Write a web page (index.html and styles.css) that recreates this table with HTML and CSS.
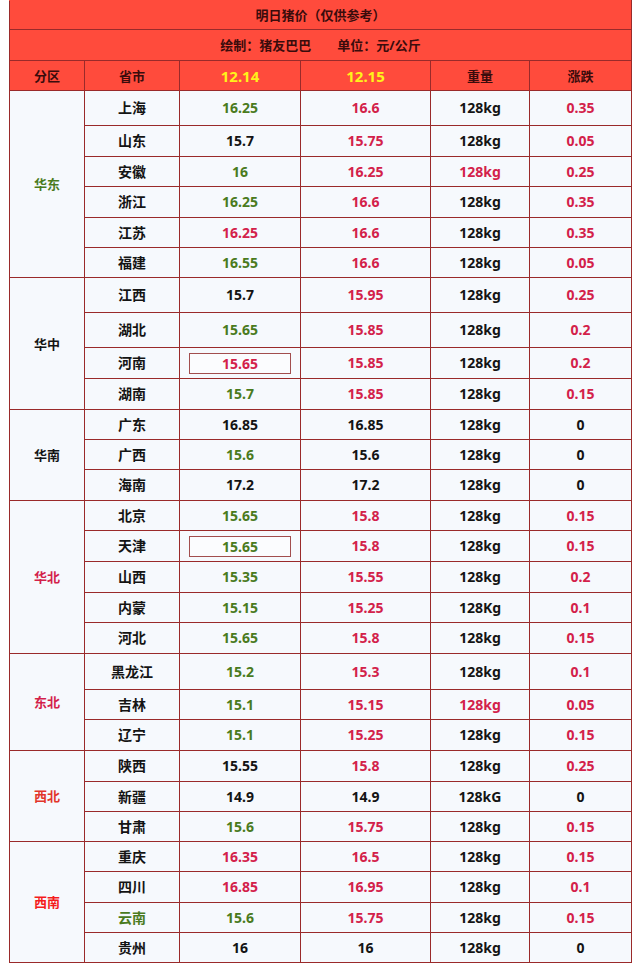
FILE: index.html
```html
<!DOCTYPE html>
<html lang="zh">
<head>
<meta charset="utf-8">
<title>明日猪价</title>
<link rel="stylesheet" href="styles.css">
</head>
<body>
<div class="page">
<table class="price">
  <colgroup>
    <col class="c-area"><col class="c-prov"><col class="c-d1"><col class="c-d2"><col class="c-w"><col class="c-chg">
  </colgroup>
  <thead>
    <tr class="t-title"><th colspan="6">明日猪价<span class="punct">（</span>仅供参考<span class="punct">）</span></th></tr>
    <tr class="t-sub"><th colspan="6">绘制<span class="punct">：</span>猪友巴巴<span class="gap">单位<span class="punct">：</span>元/公斤</span></th></tr>
    <tr class="t-head"><th>分区</th><th>省市</th><th class="date">12.14</th><th class="date">12.15</th><th>重量</th><th>涨跌</th></tr>
  </thead>
  <tbody>
    <tr class="r35"><td rowspan="6" class="area g">华东</td><td>上海</td><td class="g">16.25</td><td class="r">16.6</td><td>128kg</td><td class="r">0.35</td></tr>
    <tr class="r31"><td>山东</td><td>15.7</td><td class="r">15.75</td><td>128kg</td><td class="r">0.05</td></tr>
    <tr class="r30"><td>安徽</td><td class="g">16</td><td class="r">16.25</td><td class="r">128kg</td><td class="r">0.25</td></tr>
    <tr class="r31"><td>浙江</td><td class="g">16.25</td><td class="r">16.6</td><td>128kg</td><td class="r">0.35</td></tr>
    <tr class="r30"><td>江苏</td><td class="r">16.25</td><td class="r">16.6</td><td>128kg</td><td class="r">0.35</td></tr>
    <tr class="r30"><td>福建</td><td class="g">16.55</td><td class="r">16.6</td><td>128kg</td><td class="r">0.05</td></tr>

    <tr class="r35"><td rowspan="4" class="area">华中</td><td>江西</td><td>15.7</td><td class="r">15.95</td><td>128kg</td><td class="r">0.25</td></tr>
    <tr class="r35"><td>湖北</td><td class="g">15.65</td><td class="r">15.85</td><td>128kg</td><td class="r">0.2</td></tr>
    <tr class="r31"><td>河南</td><td class="r"><span class="boxed">15.65</span></td><td class="r">15.85</td><td>128kg</td><td class="r">0.2</td></tr>
    <tr class="r31"><td>湖南</td><td class="g">15.7</td><td class="r">15.85</td><td>128kg</td><td class="r">0.15</td></tr>

    <tr class="r30"><td rowspan="3" class="area">华南</td><td>广东</td><td>16.85</td><td>16.85</td><td>128kg</td><td>0</td></tr>
    <tr class="r30"><td>广西</td><td class="g">15.6</td><td>15.6</td><td>128kg</td><td>0</td></tr>
    <tr class="r31"><td>海南</td><td>17.2</td><td>17.2</td><td>128kg</td><td>0</td></tr>

    <tr class="r30"><td rowspan="5" class="area r">华北</td><td>北京</td><td class="g">15.65</td><td class="r">15.8</td><td>128kg</td><td class="r">0.15</td></tr>
    <tr class="r31"><td>天津</td><td class="g"><span class="boxed">15.65</span></td><td class="r">15.8</td><td>128kg</td><td class="r">0.15</td></tr>
    <tr class="r31"><td>山西</td><td class="g">15.35</td><td class="r">15.55</td><td>128kg</td><td class="r">0.2</td></tr>
    <tr class="r30"><td>内蒙</td><td class="g">15.15</td><td class="r">15.25</td><td>128Kg</td><td class="r">0.1</td></tr>
    <tr class="r31"><td>河北</td><td class="g">15.65</td><td class="r">15.8</td><td>128kg</td><td class="r">0.15</td></tr>

    <tr class="r36"><td rowspan="3" class="area r">东北</td><td>黑龙江</td><td class="g">15.2</td><td class="r">15.3</td><td>128kg</td><td class="r">0.1</td></tr>
    <tr class="r30"><td>吉林</td><td class="g">15.1</td><td class="r">15.15</td><td class="r">128kg</td><td class="r">0.05</td></tr>
    <tr class="r31"><td>辽宁</td><td class="g">15.1</td><td class="r">15.25</td><td>128kg</td><td class="r">0.15</td></tr>

    <tr class="r31"><td rowspan="3" class="area o">西北</td><td>陕西</td><td>15.55</td><td class="r">15.8</td><td>128kg</td><td class="r">0.25</td></tr>
    <tr class="r30"><td>新疆</td><td>14.9</td><td>14.9</td><td>128kG</td><td>0</td></tr>
    <tr class="r30"><td>甘肃</td><td class="g">15.6</td><td class="r">15.75</td><td>128kg</td><td class="r">0.15</td></tr>

    <tr class="r30"><td rowspan="4" class="area br">西南</td><td>重庆</td><td class="r">16.35</td><td class="r">16.5</td><td>128kg</td><td class="r">0.15</td></tr>
    <tr class="r31"><td>四川</td><td class="r">16.85</td><td class="r">16.95</td><td>128kg</td><td class="r">0.1</td></tr>
    <tr class="r30"><td class="g">云南</td><td class="g">15.6</td><td class="r">15.75</td><td>128kg</td><td class="r">0.15</td></tr>
    <tr class="r30"><td>贵州</td><td>16</td><td>16</td><td>128kg</td><td>0</td></tr>
  </tbody>
</table>
</div>
</body>
</html>
```
FILE: styles.css
```css
html, body {
  margin: 0;
  padding: 0;
  background: #ffffff;
}
.page {
  padding: 0 0 0 9px;
}
.price {
  border-collapse: collapse;
  table-layout: fixed;
  width: 622px;
  font-family: "Noto Sans", "Noto Sans CJK SC", sans-serif;
  font-weight: 700;
  font-size: 14px;
  color: #141414;
}
.c-area { width: 75px; }
.c-prov { width: 95px; }
.c-d1 { width: 121px; }
.c-d2 { width: 130px; }
.c-w { width: 99px; }
.c-chg { width: 102px; }

.price th, .price td {
  border: 1px solid #9a2a2a;
  padding: 0;
  text-align: center;
  vertical-align: middle;
  line-height: 16px;
}
.price thead th {
  background: #ff4b3c;
  color: #3a0c0c;
  font-size: 13px;
}
.price thead tr.t-title th { border-top-color: #ff4b3c; }
.t-title { height: 29px; }
.t-sub { height: 31px; }
.t-head { height: 30px; }
.punct { font-family: "Noto Sans CJK TC", "Noto Sans CJK SC", sans-serif; }
.gap { margin-left: 26px; }
.price thead th.date {
  color: #fff31a;
  font-size: 15px;
}
.price tbody td {
  background: #f6f9fd;
}
.area { font-size: 13px; }

.r30 { height: 30px; }
.r31 { height: 31px; }
.r35 { height: 35px; }
.r36 { height: 36px; }

.g { color: #4a7b1d; }
.r { color: #d3214a; }
.o { color: #e2352a; }
.br { color: #f51c1c; }

.boxed {
  display: inline-block;
  box-sizing: border-box;
  width: 102px;
  height: 21px;
  line-height: 19px;
  border: 1.5px solid #a24e4e;
  background: #fbfcfe;
}
```
